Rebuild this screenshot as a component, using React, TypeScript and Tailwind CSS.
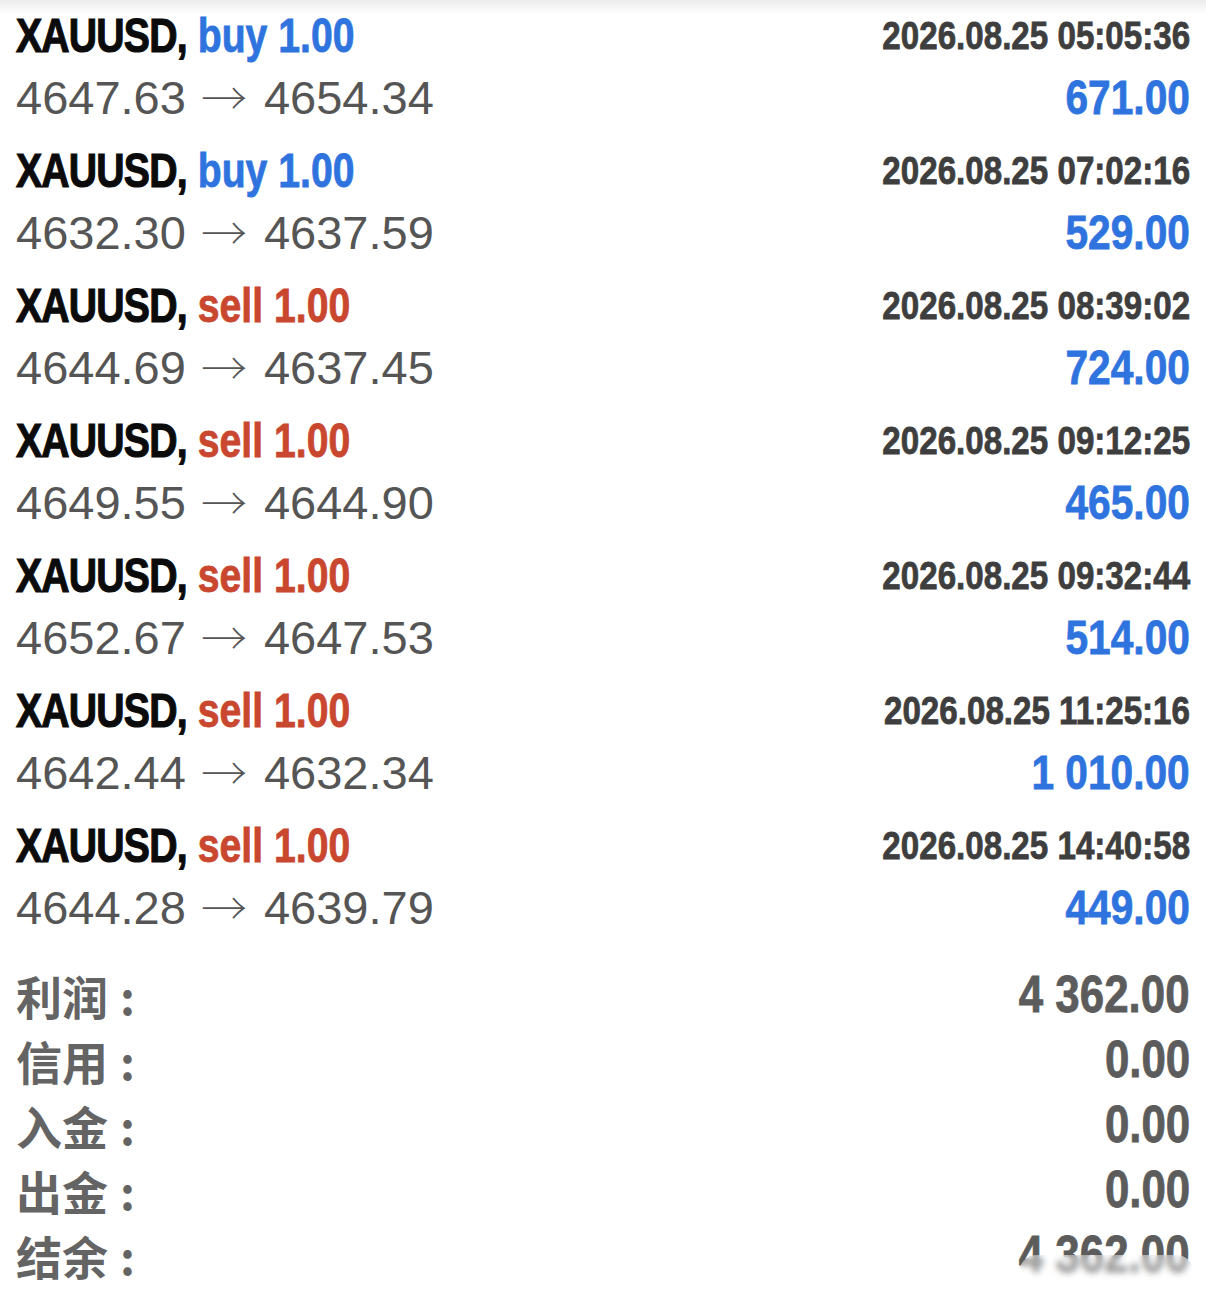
import React from "react";

type Trade = {
  side: "buy" | "sell";
  open: string;
  close: string;
  time: string;
  profit: string;
};

const trades: Trade[] = [
  { side: "buy", open: "4647.63", close: "4654.34", time: "2026.08.25 05:05:36", profit: "671.00" },
  { side: "buy", open: "4632.30", close: "4637.59", time: "2026.08.25 07:02:16", profit: "529.00" },
  { side: "sell", open: "4644.69", close: "4637.45", time: "2026.08.25 08:39:02", profit: "724.00" },
  { side: "sell", open: "4649.55", close: "4644.90", time: "2026.08.25 09:12:25", profit: "465.00" },
  { side: "sell", open: "4652.67", close: "4647.53", time: "2026.08.25 09:32:44", profit: "514.00" },
  { side: "sell", open: "4642.44", close: "4632.34", time: "2026.08.25 11:25:16", profit: "1 010.00" },
  { side: "sell", open: "4644.28", close: "4639.79", time: "2026.08.25 14:40:58", profit: "449.00" },
];

const summary = [
  { label: "利润", value: "4 362.00" },
  { label: "信用", value: "0.00" },
  { label: "入金", value: "0.00" },
  { label: "出金", value: "0.00" },
  { label: "结余", value: "4 362.00" },
];

// condensed bold look: Arial-width bold squeezed horizontally
const bold =
  "font-['Liberation_Sans',Arial,sans-serif] font-bold inline-block whitespace-nowrap [-webkit-text-stroke:0.8px_currentColor]";

export default function App() {
  return (
    <main className="relative w-[1206px] min-h-[1305px] bg-[linear-gradient(to_bottom,#ececec,#ffffff_14px)] px-4 pt-[4px] overflow-hidden">
      {/* Closed positions */}
      <div className="flex flex-col">
        {trades.map((t, i) => (
          <TradeRow key={i} trade={t} />
        ))}
      </div>

      {/* Totals */}
      <div className="mt-[13px] flex flex-col">
        {summary.map((s) => (
          <div key={s.label} className="h-[65px] flex items-center justify-between">
            <span className="font-['Noto_Sans_CJK_SC',sans-serif] font-bold text-[46px] leading-none text-[#646464]">
              {s.label}
              <span className="ml-[12px]">:</span>
            </span>
            <span className={`${bold} text-[51px] leading-none text-[#5c5c5c] origin-right scale-x-[0.86]`}>{s.value}</span>
          </div>
        ))}
      </div>

      {/* watermark smudge over last value */}
      <div className="absolute right-[12px] bottom-[14px] w-[175px] h-[36px] rounded-full bg-white/40 backdrop-blur-[3px]" />
    </main>
  );
}

function TradeRow({ trade }: { trade: Trade }) {
  const sideColor = trade.side === "buy" ? "text-[#2f74de]" : "text-[#c9472f]";
  return (
    <div className="h-[135px] flex flex-col">
      <div className="h-[62px] flex items-center justify-between">
        <span className={`${bold} text-[49px] leading-none origin-left scale-x-[0.8]`}>
          <span className="text-[#0b0b0b] tracking-[-1px] [-webkit-text-stroke:1.2px_#0b0b0b]">XAUUSD,</span>{" "}
          <span className={sideColor}>{trade.side} 1.00</span>
        </span>
        <span className={`${bold} text-[39px] leading-none text-[#3e3e3e] origin-right scale-x-[0.85]`}>{trade.time}</span>
      </div>
      <div className="h-[62px] flex items-center justify-between">
        <span className="font-['Liberation_Sans',Arial,sans-serif] text-[47px] leading-none text-[#555555] whitespace-nowrap flex items-center">
          <span>{trade.open}</span>
          <span className="font-['Noto_Sans_CJK_SC',sans-serif] font-thin text-[46px] text-[#555555] ml-[15px] mr-[17px] -translate-y-[2px]">→</span>
          <span>{trade.close}</span>
        </span>
        <span className={`${bold} text-[49px] leading-none text-[#2f74de] origin-right scale-x-[0.83]`}>{trade.profit}</span>
      </div>
    </div>
  );
}
